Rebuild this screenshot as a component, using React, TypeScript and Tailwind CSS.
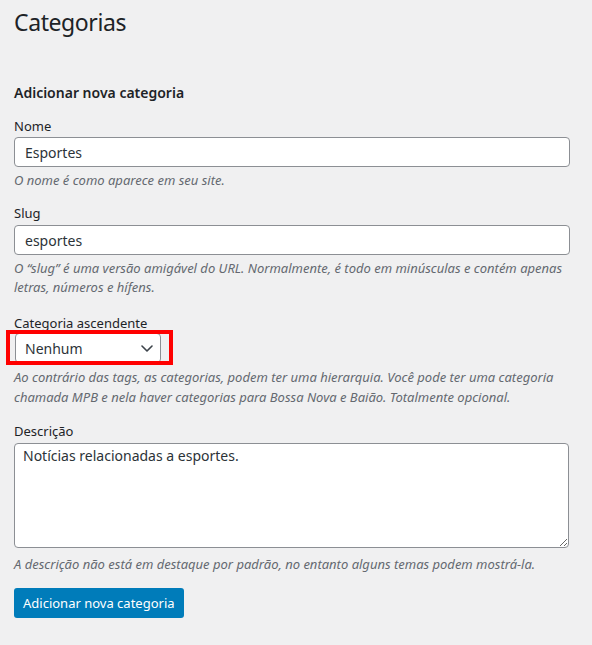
const font = { fontFamily: '"Noto Sans", "Open Sans", sans-serif' };

function Help({ children }: { children: React.ReactNode }) {
  return (
    <p className="text-[13px] italic leading-[19.5px] text-[#646970]">
      {children}
    </p>
  );
}

function Label({ htmlFor, children }: { htmlFor: string; children: React.ReactNode }) {
  return (
    <label htmlFor={htmlFor} className="block text-[13px] leading-[19.5px] text-[#1d2327]">
      {children}
    </label>
  );
}

const inputClasses =
  "block h-[30px] w-[556px] rounded-[4px] border border-[#8c8f94] bg-white px-[10px] text-[14px] text-[#2c3338] outline-none";

export default function App() {
  return (
    <div className="min-h-[645px] bg-[#f0f0f1] px-[14px] pt-[7px]" style={font}>
      <h1 className="text-[23px] leading-[30px] tracking-[-0.4px] text-[#1d2327]">Categorias</h1>

      <form className="mt-[46px]" onSubmit={(e) => e.preventDefault()}>
        <h2 className="text-[14px] font-semibold leading-[20px] text-[#1d2327]">
          Adicionar nova categoria
        </h2>

        <div className="mt-[14px]">
          <Label htmlFor="tag-name">Nome</Label>
          <input id="tag-name" defaultValue="Esportes" className={`${inputClasses} pt-[2px]`} />
          <div className="mt-[4px]">
            <Help>O nome é como aparece em seu site.</Help>
          </div>
        </div>

        <div className="mt-[14px]">
          <Label htmlFor="tag-slug">Slug</Label>
          <input id="tag-slug" defaultValue="esportes" className={`${inputClasses} mt-[1px] pt-[2px]`} />
          <div className="mt-[4px]">
            <Help>
              O “slug” é uma versão amigável do URL. Normalmente, é todo em minúsculas e contém
              apenas letras, números e hífens.
            </Help>
          </div>
        </div>

        <div className="mt-[16px]">
          <Label htmlFor="parent">Categoria ascendente</Label>
          <div className="relative ml-[1px] w-[146px]">
            <select
              id="parent"
              className="block h-[30px] w-[146px] appearance-none rounded-[4px] border border-[#8c8f94] bg-white pl-[9px] text-[14px] text-[#2c3338] outline-none"
            >
              <option>Nenhum</option>
            </select>
            <svg
              aria-hidden
              viewBox="0 0 12 7"
              className="pointer-events-none absolute right-[8px] top-[12px] h-[7px] w-[12px]"
              fill="none"
              stroke="#3c434a"
              strokeWidth="1.6"
              strokeLinecap="round"
              strokeLinejoin="round"
            >
              <polyline points="1,1 6,6 11,1" />
            </svg>
            {/* red highlight annotation */}
            <div className="pointer-events-none absolute -left-[9px] -top-[3px] h-[35px] w-[167px] border-[4px] border-[#ff0000]" />
          </div>
          <div className="mt-[5px]">
            <Help>
              Ao contrário das tags, as categorias, podem ter uma hierarquia. Você pode ter uma
              categoria chamada MPB e nela haver categorias para Bossa Nova e Baião. Totalmente
              opcional.
            </Help>
          </div>
        </div>

        <div className="mt-[15px]">
          <Label htmlFor="tag-description">Descrição</Label>
          <textarea
            id="tag-description"
            defaultValue="Notícias relacionadas a esportes."
            className="mt-[1px] block h-[105px] w-[555px] rounded-[4px] border border-[#8c8f94] bg-white px-[8px] py-[2px] text-[14px] leading-[20px] text-[#2c3338] outline-none"
          />
          <div className="mt-[7px]">
            <Help>
              A descrição não está em destaque por padrão, no entanto alguns temas podem
              mostrá-la.
            </Help>
          </div>
        </div>

        <button
          type="submit"
          className="mt-[14px] h-[30px] rounded-[3px] bg-[#007cba] px-[9px] pt-[2px] text-[13px] text-white"
        >
          Adicionar nova categoria
        </button>
      </form>
    </div>
  );
}
